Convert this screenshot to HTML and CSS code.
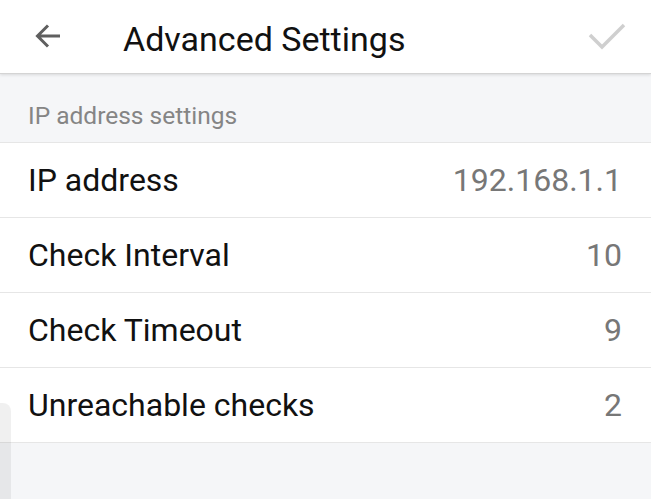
FILE: index.html
```html
<!DOCTYPE html>
<html lang="en">
<head>
    <meta charset="UTF-8">
    <meta name="viewport" content="width=device-width, initial-scale=1.0">
    <title>Advanced Settings</title>
    <link rel="stylesheet" href="styles.css">
</head>
<body>
    <header class="topbar">
        <span class="icon back">
            <svg width="30" height="30" viewBox="0 0 30 30"><path d="M27 15H5M15 4.5L4.5 15 15 25.5" fill="none" stroke="#5f5f5f" stroke-width="3"/></svg>
        </span>
        <h1 class="title">Advanced Settings</h1>
        <span class="icon done">
            <svg width="38" height="28" viewBox="0 0 38 28"><path d="M2 12l12 12L36 2" fill="none" stroke="#cfcfcf" stroke-width="3.5"/></svg>
        </span>
    </header>

    <div class="section-label">IP address settings</div>

    <div class="list">
        <div class="row"><span class="name">IP address</span><span class="value">192.168.1.1</span></div>
        <div class="row"><span class="name">Check Interval</span><span class="value">10</span></div>
        <div class="row"><span class="name">Check Timeout</span><span class="value">9</span></div>
        <div class="row"><span class="name">Unreachable checks</span><span class="value">2</span></div>
    </div>

    <!-- edge handle -->
    <div class="edge-tab"></div>
</body>
</html>
```

FILE: styles.css
```css
* {
    margin: 0;
    padding: 0;
    box-sizing: border-box;
}
body {
    font-family: Roboto, "Noto Sans", sans-serif;
    background-color: #f5f6f8;
    color: #111;
    height: 499px;
    overflow: hidden;
}
.topbar {
    display: flex;
    align-items: center;
    height: 74px;
    background-color: #fff;
    border-bottom: 1px solid #d4d4d4;
    box-shadow: 0 1px 3px rgba(0, 0, 0, 0.12);
    position: relative;
}
.icon {
    display: flex;
    align-items: center;
    justify-content: center;
}
.back {
    width: 30px;
    margin-left: 33px;
    margin-top: -2px;
}
.title {
    font-weight: 400;
    font-size: 34px;
    margin-left: 60px;
    flex: 1;
    color: #111;
    margin-top: 4px;
}
.done {
    margin-right: 25px;
    margin-top: 1px;
}
.section-label {
    height: 69px;
    padding: 27px 28px 0;
    font-size: 24.5px;
    color: #858585;
    border-bottom: 1px solid #e6e6e6;
}
.list {
    background-color: #fff;
}
.row {
    display: flex;
    justify-content: space-between;
    align-items: center;
    height: 75px;
    padding: 0 29px 0 28px;
    border-bottom: 1px solid #e6e6e6;
    font-size: 32px;
}
.value {
    color: #777;
}
.edge-tab {
    position: absolute;
    left: 0;
    top: 403px;
    width: 11px;
    height: 100px;
    background: rgba(0, 0, 0, 0.06);
    border-top-right-radius: 8px;
}
```
